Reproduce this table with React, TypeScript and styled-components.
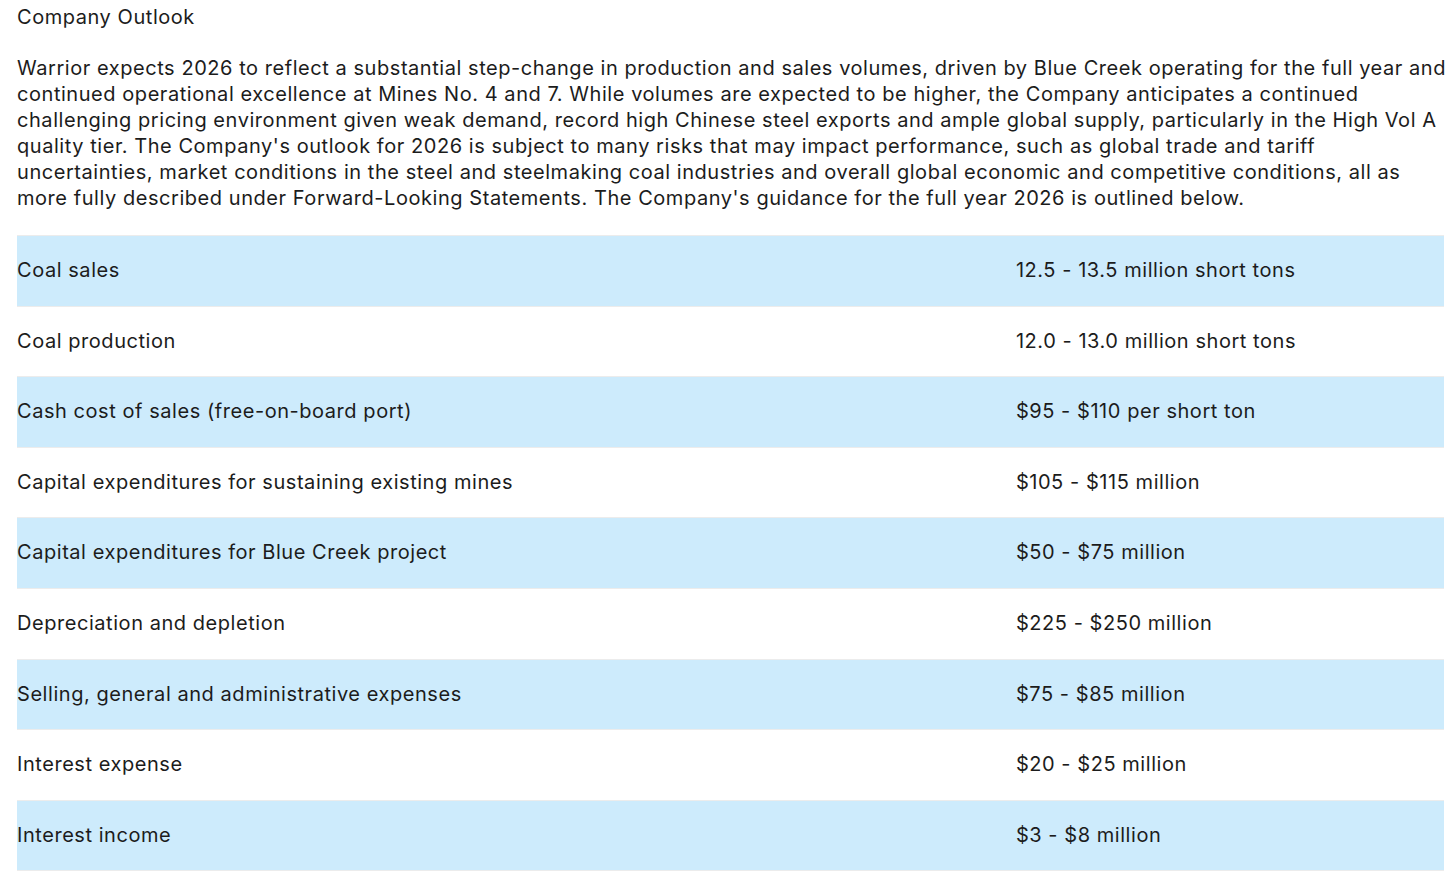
import { createGlobalStyle } from 'styled-components';
import styled from 'styled-components';

const GlobalStyle = createGlobalStyle`
  html, body {
    margin: 0;
    padding: 0;
    background: #ffffff;
  }
  body {
    font-family: Inter, 'Noto Sans', sans-serif;
    color: #1c1c1c;
  }
`;

const Page = styled.div`
  padding: 4px 12px 0 17px;
  font-size: 20px;
  line-height: 26px;
  letter-spacing: 0.55px;
`;

const Title = styled.div`
  margin: 0;
`;

const Paragraph = styled.p`
  margin: 25px -6px 24px 0;
`;

const Table = styled.table`
  width: 100%;
  border-collapse: collapse;
`;

const Row = styled.tr<{ $shaded: boolean }>`
  background-color: ${(p) => (p.$shaded ? '#cdebfc' : '#ffffff')};
  border-top: 1px solid #ececec;
  border-bottom: 1px solid #ececec;
`;

const LabelCell = styled.td`
  width: 70%;
  padding: 22px 0;
  line-height: 25.6px;
  vertical-align: middle;
`;

const ValueCell = styled.td`
  padding: 22px 0;
  line-height: 25.6px;
  vertical-align: middle;
`;

const rows: [string, string][] = [
  ['Coal sales', '12.5 - 13.5 million short tons'],
  ['Coal production', '12.0 - 13.0 million short tons'],
  ['Cash cost of sales (free-on-board port)', '$95 - $110 per short ton'],
  ['Capital expenditures for sustaining existing mines', '$105 - $115 million'],
  ['Capital expenditures for Blue Creek project', '$50 - $75 million'],
  ['Depreciation and depletion', '$225 - $250 million'],
  ['Selling, general and administrative expenses', '$75 - $85 million'],
  ['Interest expense', '$20 - $25 million'],
  ['Interest income', '$3 - $8 million'],
];

const App = () => {
  return (
    <>
      <GlobalStyle />
      <Page>
        <Title>Company Outlook</Title>
        <Paragraph>
          Warrior expects 2026 to reflect a substantial step-change in production and sales volumes, driven by
          Blue Creek operating for the full year and continued operational excellence at Mines No. 4 and 7. While
          volumes are expected to be higher, the Company anticipates a continued challenging pricing environment
          given weak demand, record high Chinese steel exports and ample global supply, particularly in the High
          Vol A quality tier. The Company's outlook for 2026 is subject to many risks that may impact performance,
          such as global trade and tariff uncertainties, market conditions in the steel and steelmaking coal
          industries and overall global economic and competitive conditions, all as more fully described under
          Forward-Looking Statements. The Company's guidance for the full year 2026 is outlined below.
        </Paragraph>
        <Table>
          <tbody>
            {rows.map(([label, value], i) => (
              <Row key={label} $shaded={i % 2 === 0}>
                <LabelCell>{label}</LabelCell>
                <ValueCell>{value}</ValueCell>
              </Row>
            ))}
          </tbody>
        </Table>
      </Page>
    </>
  );
};

export default App;
